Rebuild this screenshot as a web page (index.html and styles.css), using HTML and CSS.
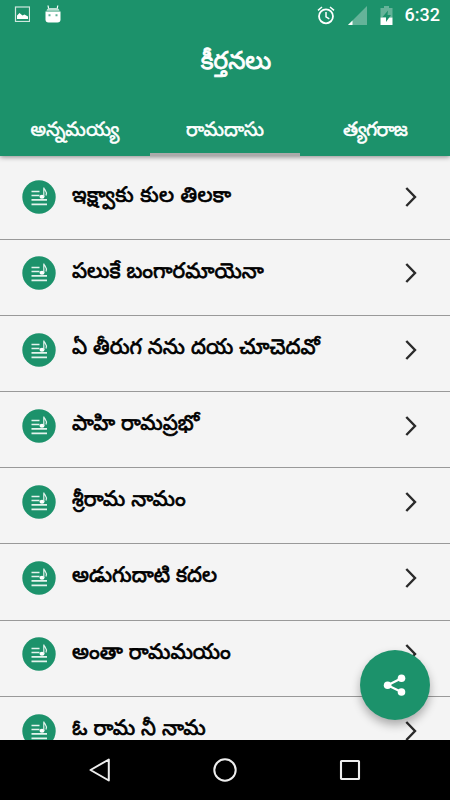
FILE: index.html
```html
<!DOCTYPE html>
<html lang="te">
<head>
    <meta charset="UTF-8">
    <meta name="viewport" content="width=device-width, initial-scale=1.0">
    <title>కీర్తనలు</title>
    <link rel="stylesheet" href="styles.css">
</head>
<body>
    <!-- Shared icons -->
    <svg class="icon-defs">
        <symbol id="icon-song" viewBox="0 0 34 34">
            <circle cx="17" cy="17" r="16.7" fill="#1c926b" />
            <path d="M9.5 11.5h8M9.5 15.5h8M9.5 19.8h15.5M9.5 24.3h15.5" stroke="#e4f3ed" stroke-width="1.7" />
            <ellipse cx="20" cy="16.8" rx="2.5" ry="2" fill="#fff" />
            <path d="M21.8 16.8V7.5c.2 2.6 4 3.5 2.2 8" stroke="#e4f3ed" stroke-width="1.2" fill="none" />
        </symbol>
        <symbol id="icon-arrow" viewBox="0 0 14 22">
            <path d="M2.3 2l8.7 9-8.7 9" fill="none" stroke="#2a2a2a" stroke-width="2.4" />
        </symbol>
    </svg>

    <header>
        <div class="status-bar">
            <div class="status-left">
                <svg width="16" height="16" viewBox="0 0 16 16">
                    <rect x="1.5" y="1" width="14" height="14.5" fill="none" stroke="#cfe8df" stroke-width="1.2" />
                    <path d="M3 13V9.500l2.5-2.500 3 2.500 2-1 3.500 2V13z" fill="#fff" />
                </svg>
                <svg width="16" height="18" viewBox="0 0 16 18">
                    <path d="M3.8 4.5L3 .5M12 4.5l.8-4" stroke="#fff" stroke-width="1.2" />
                    <path d="M1.5 5.7Q2 3 5 3h6q3 0 3.5 2.7z" fill="#bfe0d4" />
                    <path d="M.5 6.500h15v8q0 3-3 3h-9q-3 0-3-3z" fill="#fff" />
                    <path d="M3.5 9.200h2v2h-2zM10.500 9.200h2v2h-2z" fill="#5fb196" />
                </svg>
            </div>
            <div class="status-right">
                <svg width="18" height="19" viewBox="0 0 18 19">
                    <circle cx="9" cy="10.3" r="7" fill="none" stroke="#fff" stroke-width="1.8" />
                    <path d="M1 4.3L5 1M17 4.3L13 1M9 6v4.8l3.3 2" fill="none" stroke="#fff" stroke-width="1.5" />
                </svg>
                <svg width="19" height="19" viewBox="0 0 19 19">
                    <path d="M19 0v19H0z" fill="#65b399" />
                    <path d="M4.5 14.5V19H0z" fill="#fff" />
                </svg>
                <svg width="13" height="19" viewBox="0 0 13 19">
                    <path d="M.5 2H4V0h5v2h3.5v9.500H.5z" fill="#65b399" />
                    <path d="M.5 11.500h12V19H.5z" fill="#fff" />
                    <path d="M8 4.500L2.500 11H6v5l5-7H7.500z" fill="#1c926b" />
                </svg>
                <span class="clock">6:32</span>
            </div>
        </div>
        <h1>కీర్తనలు</h1>
        <nav>
            <ul>
                <li><a href="#">అన్నమయ్య</a></li>
                <li><a href="#" class="active">రామదాసు</a></li>
                <li><a href="#" class="tight">త్యగరాజ</a></li>
            </ul>
        </nav>
    </header>

    <main>
        <ul class="song-list">
            <li class="song"><svg class="song-icon"><use href="#icon-song" /></svg><span class="song-title">ఇక్ష్వాకు కుల తిలకా</span><svg class="arrow"><use href="#icon-arrow" /></svg></li>
            <li class="song"><svg class="song-icon"><use href="#icon-song" /></svg><span class="song-title">పలుకే బంగారమాయెనా</span><svg class="arrow"><use href="#icon-arrow" /></svg></li>
            <li class="song"><svg class="song-icon"><use href="#icon-song" /></svg><span class="song-title">ఏ తీరుగ నను దయ చూచెదవో</span><svg class="arrow"><use href="#icon-arrow" /></svg></li>
            <li class="song"><svg class="song-icon"><use href="#icon-song" /></svg><span class="song-title">పాహి రామప్రభో</span><svg class="arrow"><use href="#icon-arrow" /></svg></li>
            <li class="song"><svg class="song-icon"><use href="#icon-song" /></svg><span class="song-title">శ్రీరామ నామం</span><svg class="arrow"><use href="#icon-arrow" /></svg></li>
            <li class="song"><svg class="song-icon"><use href="#icon-song" /></svg><span class="song-title">అడుగుదాటి కదల</span><svg class="arrow"><use href="#icon-arrow" /></svg></li>
            <li class="song"><svg class="song-icon"><use href="#icon-song" /></svg><span class="song-title">అంతా రామమయం</span><svg class="arrow"><use href="#icon-arrow" /></svg></li>
            <li class="song"><svg class="song-icon"><use href="#icon-song" /></svg><span class="song-title">ఓ రామ నీ నామ</span><svg class="arrow"><use href="#icon-arrow" /></svg></li>
        </ul>
        <button class="share-btn" aria-label="Share">
            <svg width="24" height="24" viewBox="0 0 24 24">
                <path d="M18.5 5.200L4.600 12.300l13.900 6.700" fill="none" stroke="#fff" stroke-width="2.2" />
                <circle cx="18.5" cy="5.2" r="3.8" fill="#fff" />
                <circle cx="4.6" cy="12.3" r="3.8" fill="#fff" />
                <circle cx="18.5" cy="19" r="3.8" fill="#fff" />
            </svg>
        </button>
    </main>

    <footer>
        <svg width="24" height="26" viewBox="0 0 24 26">
            <path d="M20.8 2.500v21L2.500 13z" fill="none" stroke="#eee" stroke-width="2" stroke-linejoin="round" />
        </svg>
        <svg width="24" height="26" viewBox="0 0 24 26">
            <circle cx="12" cy="13" r="10.7" fill="none" stroke="#eee" stroke-width="2" />
        </svg>
        <svg width="24" height="26" viewBox="0 0 24 26">
            <rect x="3" y="4" width="18" height="18" rx=".5" fill="none" stroke="#eee" stroke-width="2.1" />
        </svg>
    </footer>
</body>
</html>
```
FILE: styles.css
```css
* {
    box-sizing: border-box;
}

body {
    font-family: 'Noto Sans Telugu', 'Noto Sans', sans-serif;
    background: #f4f4f4;
    color: #000;
    margin: 0;
    height: 800px;
    display: flex;
    flex-direction: column;
    overflow: hidden;
}

svg {
    display: block;
    flex-shrink: 0;
}

.icon-defs {
    position: absolute;
    width: 0;
    height: 0;
}

header {
    background: #1c926b;
    color: #fff;
    height: 156px;
    flex-shrink: 0;
    display: flex;
    flex-direction: column;
    box-shadow: 0 1px 5px rgba(0, 0, 0, 0.45);
    z-index: 1;
}

.status-bar {
    height: 30px;
    padding: 0 10px 0 14px;
    display: flex;
    justify-content: space-between;
    align-items: center;
}

.status-left {
    display: flex;
    align-items: center;
    gap: 15px;
    padding-bottom: 2px;
}

.status-right {
    display: flex;
    align-items: center;
    gap: 13px;
}

.clock {
    font: 500 18px/32px Roboto, sans-serif;
    margin-left: -1px;
}

header h1 {
    margin: 0;
    padding: 3px 0 0 22px;
    height: 64px;
    line-height: 64px;
    font-size: 24.5px;
    font-weight: 400;
    -webkit-text-stroke: 0.8px #fff;
    text-align: center;
}

nav {
    flex: 1;
    display: flex;
}

nav ul {
    list-style: none;
    padding: 0;
    margin: 0;
    display: flex;
    width: 100%;
}

nav ul li {
    flex: 1;
    display: flex;
}

nav ul li a {
    flex: 1;
    height: 62px;
    padding-top: 13px;
    color: #fff;
    text-decoration: none;
    text-align: center;
    font-size: 19.4px;
    font-weight: 400;
    -webkit-text-stroke: 0.5px #fff;
    line-height: 50px;
}

nav ul li a.tight {
    letter-spacing: -0.9px;
}

nav ul li a.active {
    border-bottom: 3px solid #aaa;
}

main {
    flex: 1;
    min-height: 0;
    position: relative;
    overflow: hidden;
}

.song-list {
    list-style: none;
    margin: 0;
    padding: 7.5px 0 0;
}

.song {
    height: 76.2px;
    padding: 0 32px 0 22px;
    display: flex;
    align-items: flex-start;
    border-bottom: 1px solid #999;
}

.song-icon {
    width: 34px;
    height: 34px;
    margin-top: 16.8px;
}

.song-title {
    flex: 1;
    margin: 21px 0 0 16px;
    font-size: 21.2px;
    font-weight: 400;
    -webkit-text-stroke: 0.7px #000;
    line-height: 26px;
    white-space: nowrap;
}

.song:first-child .song-title {
    letter-spacing: 0.3px;
}

.arrow {
    width: 14px;
    height: 22px;
    margin-top: 22.8px;
}

/* Floating button over the list */
.share-btn {
    position: absolute;
    right: 20px;
    bottom: 20px;
    width: 70px;
    height: 70px;
    padding: 0;
    border: none;
    border-radius: 50%;
    background: #1c926b;
    box-shadow: 0 5px 10px rgba(0, 0, 0, 0.3);
    display: flex;
    align-items: center;
    justify-content: center;
}

footer {
    background: #000;
    height: 60px;
    flex-shrink: 0;
    display: flex;
    align-items: center;
    justify-content: center;
    gap: 101px;
}
```
